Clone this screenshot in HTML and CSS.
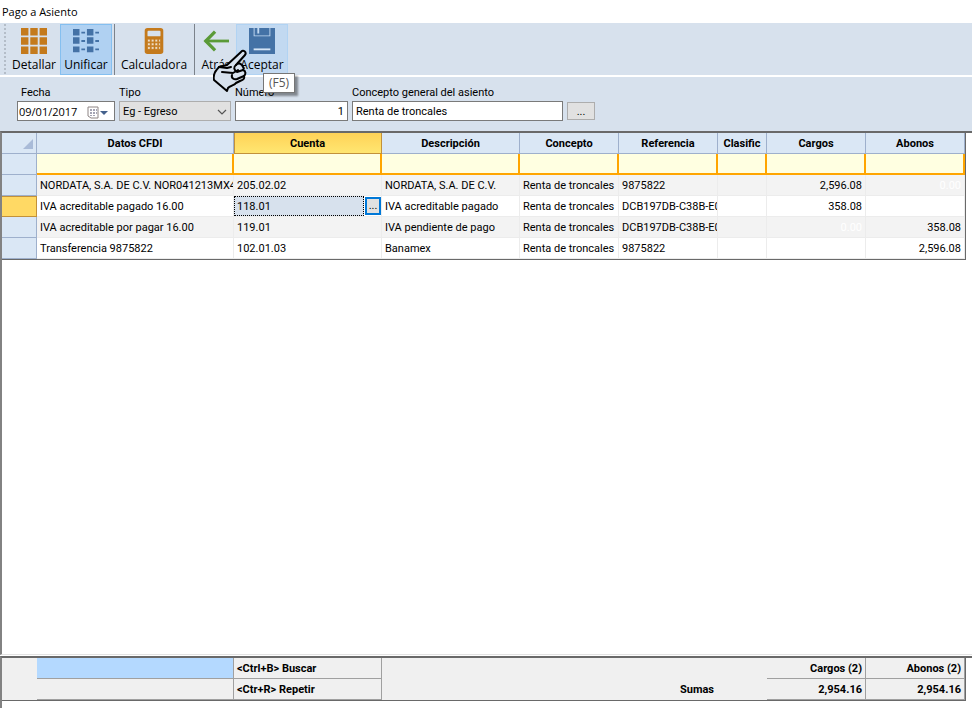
FILE: index.html
```html
<!DOCTYPE html>
<html lang="es">
<head>
  <meta charset="UTF-8">
  <title>Pago a Asiento</title>
  <meta name="viewport" content="width=device-width, initial-scale=1.0">
  <!-- Estilos -->
  <link rel="stylesheet" href="styles.css">
</head>
<body>
<div class="ventana">

  <h1 class="titulo">Pago a Asiento</h1>

  <!-- Barra de herramientas -->
  <div class="barra">
    <span class="agarre"></span>
    <button type="button" class="boton">
      <svg width="28" height="28" viewBox="0 0 28 28" fill="#c47a1c">
        <path d="M0 0h8v8H0zM10 0h8v8h-8zM20 0h8v8h-8zM0 10h8v8H0zM10 10h8v8h-8zM20 10h8v8h-8zM0 20h8v8H0zM10 20h8v8h-8zM20 20h8v8h-8z"/>
      </svg>
      Detallar
    </button>
    <button type="button" class="boton activo">
      <svg width="28" height="28" viewBox="0 0 28 28" fill="#4472a6">
        <path d="M0 1h7v7H0zM9 4h4v2H9zM15 1h7v7h-7zM24 4h4v2h-4zM0 10h7v7H0zM9 13h4v2H9zM15 10h7v7h-7zM24 13h4v2h-4zM0 20h7v6H0zM9 22h4v2H9zM15 20h7v6h-7zM24 22h4v2h-4z"/>
      </svg>
      Unificar
    </button>
    <span class="separador"></span>
    <button type="button" class="boton ancho">
      <svg width="28" height="28" viewBox="0 0 28 28">
        <rect x="4" y="0" width="20" height="28" rx="3" fill="#c47a1c"/>
        <rect x="7" y="3" width="14" height="6" rx="1" fill="#d7e1ed"/>
        <path d="M7 12h3v3H7zM11 12h3v3h-3zM15 12h3v3h-3zM19 12h2v3h-2zM7 16h3v3H7zM11 16h3v3h-3zM15 16h3v3h-3zM19 16h2v3h-2zM7 20h3v3H7zM11 20h3v3h-3zM15 20h3v3h-3zM19 20h2v3h-2z" fill="#f0dfc9" stroke="#c47a1c" stroke-width=".8"/>
      </svg>
      Calculadora
    </button>
    <span class="separador"></span>
    <button type="button" class="boton corto">
      <svg width="28" height="28" viewBox="0 0 28 28" fill="none" stroke="#5a9a37" stroke-width="3">
        <path d="M28 14H2"/>
        <path d="M13 4L3 14l10 10" stroke-width="3.5"/>
      </svg>
      Atrás
    </button>
    <button type="button" class="boton resaltado">
      <svg width="28" height="28" viewBox="0 0 28 28">
        <path d="M0 0h28v28H0z" fill="#4472a6"/>
        <path d="M5 0h1v8h16V0h1v9H5zM9 0h2v6H9z" fill="#c2d9f1"/>
        <path d="M5 22h18v2H5z" fill="#d5e5f6"/>
      </svg>
      Aceptar
    </button>

    <!-- Puntero y ayuda emergente -->
    <svg class="puntero" width="34" height="46" viewBox="0 0 34 46" fill="#d7e1ed" stroke="#000" stroke-width="2" stroke-linejoin="round" stroke-linecap="round">
      <path d="M6 18l8-2L28 3c2-3 6 0 4 3L23 16c3-3 6-1 7 2 1 1 1 2 0 3 3 1 3 4 1 6 1 3-1 4-4 5l-4 2c-1 2-6 3-8 5l-1 3L1 31c-1-4 1-9 5-13z"/>
      <path d="M6 18l8 1 4-1M9 23l11 1 5-3M23 16c-3 2-2 5 1 7l6-2M19 26c-1 3 2 5 5 4l7-3" fill="none"/>
    </svg>
    <span class="ayuda" role="tooltip">(F5)</span>
  </div>

  <!-- Datos del asiento -->
  <form class="datos">
    <div class="campo fecha">
      <label for="fecha">Fecha</label>
      <div class="caja">
        <input type="text" id="fecha" value="09/01/2017">
        <button type="button" class="calendario" aria-label="Calendario">
          <svg width="21" height="13" viewBox="0 0 21 13">
            <path d="M1 1h10v11H4l-3-2z" fill="#fff" stroke="#8d8484"/>
            <path d="M3 3h2v2H3zM6 3h2v2H6zM9 3h1v2H9zM3 6h2v2H3zM6 6h2v2H6zM9 6h1v2H9zM3 9h2v1H3zM6 9h2v1H6z" fill="#a4a4b4"/>
            <path d="M13 5h8l-4 4z" fill="#44618c"/>
          </svg>
        </button>
      </div>
    </div>
    <div class="campo tipo">
      <label for="tipo">Tipo</label>
      <div class="lista">
        <select id="tipo">
          <option>Eg - Egreso</option>
        </select>
        <svg width="10" height="6" viewBox="0 0 10 6" fill="none" stroke="#555" stroke-width="1.2">
          <path d="M1 1l4 4 4-4"/>
        </svg>
      </div>
    </div>
    <div class="campo numero">
      <label for="numero">Número</label>
      <input type="text" id="numero" value="1">
    </div>
    <div class="campo concepto">
      <label for="concepto">Concepto general del asiento</label>
      <input type="text" id="concepto" value="Renta de troncales">
    </div>
    <button type="button" class="buscar" aria-label="Buscar concepto">...</button>
  </form>

  <!-- Partidas -->
  <div class="partidas">
    <table class="rejilla">
      <colgroup>
        <col class="c-sel"><col class="c-datos"><col class="c-cuenta"><col class="c-desc"><col class="c-medio"><col class="c-medio"><col class="c-clas"><col class="c-medio"><col class="c-medio">
      </colgroup>
      <thead>
        <tr>
          <th class="marca"><svg width="10" height="10" viewBox="0 0 10 10"><path d="M10 0v10H0z" fill="#a9bbd8"/></svg></th>
          <th>Datos CFDI</th>
          <th class="orden">Cuenta</th>
          <th>Descripción</th>
          <th>Concepto</th>
          <th>Referencia</th>
          <th>Clasific</th>
          <th>Cargos</th>
          <th>Abonos</th>
        </tr>
        <tr class="filtro">
          <th></th>
          <td><input type="text" aria-label="Datos CFDI"></td>
          <td><input type="text" aria-label="Cuenta"></td>
          <td><input type="text" aria-label="Descripción"></td>
          <td><input type="text" aria-label="Concepto"></td>
          <td><input type="text" aria-label="Referencia"></td>
          <td><input type="text" aria-label="Clasific"></td>
          <td><input type="text" aria-label="Cargos"></td>
          <td><input type="text" aria-label="Abonos"></td>
        </tr>
      </thead>
      <tbody>
        <tr>
          <th></th>
          <td>NORDATA, S.A. DE C.V. NOR041213MX4</td>
          <td>205.02.02</td>
          <td>NORDATA, S.A. DE C.V.</td>
          <td>Renta de troncales</td>
          <td>9875822</td>
          <td></td>
          <td class="num">2,596.08</td>
          <td class="num cero">0.00</td>
        </tr>
        <tr>
          <th class="actual"></th>
          <td>IVA acreditable pagado 16.00</td>
          <td class="edicion">
            <div class="editor">
              <input type="text" aria-label="Cuenta" value="118.01">
              <button type="button" aria-label="Buscar cuenta">...</button>
            </div>
          </td>
          <td>IVA acreditable pagado</td>
          <td>Renta de troncales</td>
          <td>DCB197DB-C38B-E0</td>
          <td></td>
          <td class="num">358.08</td>
          <td class="num"></td>
        </tr>
        <tr>
          <th></th>
          <td>IVA acreditable por pagar 16.00</td>
          <td>119.01</td>
          <td>IVA pendiente de pago</td>
          <td>Renta de troncales</td>
          <td>DCB197DB-C38B-E0</td>
          <td></td>
          <td class="num cero">0.00</td>
          <td class="num">358.08</td>
        </tr>
        <tr>
          <th></th>
          <td>Transferencia 9875822</td>
          <td>102.01.03</td>
          <td>Banamex</td>
          <td>Renta de troncales</td>
          <td>9875822</td>
          <td></td>
          <td class="num"></td>
          <td class="num">2,596.08</td>
        </tr>
      </tbody>
    </table>
  </div>

  <!-- Totales -->
  <div class="totales">
    <table class="rejilla resumen">
      <colgroup>
        <col class="c-sel"><col class="c-datos"><col class="c-cuenta"><col class="c-desc"><col class="c-medio"><col class="c-medio"><col class="c-clas"><col class="c-medio"><col class="c-medio">
      </colgroup>
      <tbody>
        <tr>
          <td></td>
          <td class="linea azul"></td>
          <td class="linea">&lt;Ctrl+B&gt; Buscar</td>
          <td></td>
          <td></td>
          <td></td>
          <td></td>
          <td class="linea num">Cargos (2)</td>
          <td class="linea num">Abonos (2)</td>
        </tr>
        <tr>
          <td></td>
          <td class="linea"></td>
          <td class="linea">&lt;Ctr+R&gt; Repetir</td>
          <td></td>
          <td></td>
          <td class="sumas">Sumas</td>
          <td></td>
          <td class="linea num">2,954.16</td>
          <td class="linea num">2,954.16</td>
        </tr>
      </tbody>
    </table>
  </div>

</div>
</body>
</html>
```
FILE: styles.css
```css
* {
  box-sizing: border-box;
}

body {
  margin: 0;
  font-family: Roboto, "Liberation Sans", Arial, sans-serif;
  font-size: 11px;
  color: #000;
  background: #fff;
}

input,
select,
button {
  margin: 0;
  font: inherit;
  color: inherit;
  border-radius: 0;
}

svg {
  display: block;
}

.ventana {
  display: flex;
  flex-direction: column;
  min-height: 100vh;
}

.titulo {
  margin: 0;
  padding: 0 2px;
  font-family: "Open Sans", sans-serif;
  font-size: 11px;
  font-weight: normal;
  line-height: 23px;
}

/* Barra de herramientas */
.barra {
  position: relative;
  display: flex;
  align-items: stretch;
  height: 54px;
  padding: 1px 4px 0;
  background: #d7e1ed;
  border-bottom: 2px solid #fff;
}

.agarre {
  width: 2px;
  margin-right: 2px;
  background: repeating-linear-gradient(#b4bdc8 0 2px, transparent 2px 4px);
}

.boton {
  display: flex;
  flex-direction: column;
  align-items: center;
  justify-content: flex-start;
  width: 52px;
  padding: 3px 0 0;
  gap: 2px;
  font-family: "Open Sans", sans-serif;
  font-size: 12px;
  line-height: 18px;
  white-space: nowrap;
  background: none;
  border: 1px solid transparent;
}

.boton.ancho {
  width: 76px;
}

.boton.corto {
  width: 40px;
}

.boton.activo {
  background: #b0d1f2;
  border-color: #84bff0;
}

.boton.resaltado {
  background: #c2d9f1;
  border-color: #b1d3f3;
}

.separador {
  width: 1px;
  margin: 0 1px 0 2px;
  background: #7b828b;
}

.puntero {
  position: absolute;
  left: 213px;
  top: 26px;
  z-index: 1;
}

.ayuda {
  position: absolute;
  left: 263px;
  top: 50px;
  z-index: 2;
  padding: 0 5px;
  font-family: "Open Sans", sans-serif;
  font-size: 12px;
  line-height: 18px;
  color: #575757;
  background: #fff;
  border: 1px solid #767676;
  box-shadow: 3px 3px 2px rgba(0,0,0,0.4);
}

/* Datos del asiento */
.datos {
  display: flex;
  align-items: flex-end;
  gap: 4px;
  height: 54px;
  padding: 0 17px 10px;
  background: #d7e1ed;
}

.campo {
  display: flex;
  flex-direction: column;
  gap: 1px;
}

.campo label {
  line-height: 14px;
}

.campo.fecha {
  width: 98px;
}

.campo.fecha label {
  padding-left: 4px;
}

.campo.tipo {
  width: 112px;
}

.campo.numero {
  width: 113px;
}

.campo.concepto {
  width: 211px;
}

.campo input,
.campo select {
  width: 100%;
  height: 20px;
  padding: 0 3px;
  background: #fff;
  border: 1px solid #7a7a7a;
}

.campo.numero input {
  text-align: right;
}

.caja {
  display: flex;
  height: 20px;
  background: #fff;
  border: 1px solid #7a7a7a;
}

.campo .caja input {
  flex: 1;
  min-width: 0;
  height: 18px;
  padding: 0 1px;
  font-family: "Open Sans", sans-serif;
  border: none;
}

.calendario {
  padding: 2px 6px 0 0;
  background: none;
  border: none;
}

.lista {
  position: relative;
}

.campo select {
  display: block;
  appearance: none;
  background: #e1e1e1;
  border-color: #adadad;
}

.lista svg {
  position: absolute;
  right: 4px;
  top: 8px;
  pointer-events: none;
}

.buscar {
  width: 28px;
  height: 18px;
  padding: 0;
  margin-bottom: 1px;
  background: #e1e1e1;
  border: 1px solid #adadad;
}

/* Partidas */
.partidas {
  flex: 1;
  border-top: 2px solid #696969;
  border-left: 2px solid #828282;
  border-bottom: 1px solid #e3e3e3;
}

.rejilla {
  width: 964px;
  table-layout: fixed;
  border-collapse: separate;
  border-spacing: 0;
  border-right: 1px solid #696969;
  border-bottom: 1px solid #696969;
}

.c-sel { width: 35px; }
.c-datos { width: 197px; }
.c-cuenta { width: 148px; }
.c-desc { width: 138px; }
.c-medio { width: 99px; }
.c-clas { width: 49px; }

.rejilla th,
.rejilla td {
  height: 21px;
  padding: 1px 3px 0;
  line-height: 19px;
  white-space: nowrap;
  overflow: hidden;
}

.rejilla th {
  background: #dae7f5;
  border-right: 1px solid #9eb0cc;
  border-bottom: 1px solid #9eb0cc;
}

.rejilla td {
  border-right: 1px solid #ececec;
  border-bottom: 1px solid #ececec;
}

.rejilla tbody tr:nth-child(odd) td {
  background: #f3f3f3;
}

.rejilla .marca svg {
  margin-left: auto;
}

.rejilla .orden {
  background: linear-gradient(#ffd257, #ffe671);
  border-color: #c2913a;
  box-shadow: inset 1px 0 #c2913a;
}

.rejilla .actual {
  background: #ffd964;
  border-color: #c2913a;
  box-shadow: inset 0 1px #c2913a;
}

.rejilla .filtro td {
  padding: 0;
  background: #ffffe1;
  border-right: 2px solid #ffa500;
  border-bottom: 2px solid #ffa500;
}

.filtro input {
  display: block;
  width: 100%;
  height: 19px;
  padding: 0 3px;
  background: none;
  border: none;
}

.rejilla .num {
  text-align: right;
}

.rejilla .cero {
  color: #fff;
}

.rejilla .edicion {
  padding: 0;
}

.editor {
  display: flex;
  align-items: center;
  gap: 1px;
}

.editor input {
  flex: 1;
  min-width: 0;
  height: 20px;
  padding: 0 2px;
  background: #d7e1ed;
  border: 1px dotted #000;
}

.editor button {
  width: 16px;
  height: 18px;
  padding: 0;
  line-height: 12px;
  background: #e1e1e1;
  border: 2px solid #0078d7;
}

/* Totales */
.totales {
  margin-top: 1px;
  padding-bottom: 7px;
  border-top: 2px solid #696969;
  border-left: 2px solid #828282;
}

.resumen {
  font-weight: bold;
}

.rejilla.resumen tbody tr td {
  background: #f0f0f0;
  border-color: #f0f0f0;
}

.rejilla.resumen tbody tr .linea {
  border-color: #a0a0a0;
}

.rejilla.resumen tbody tr .azul {
  background: #b4d9ff;
}

.rejilla.resumen .sumas {
  text-align: right;
  vertical-align: bottom;
}
```
